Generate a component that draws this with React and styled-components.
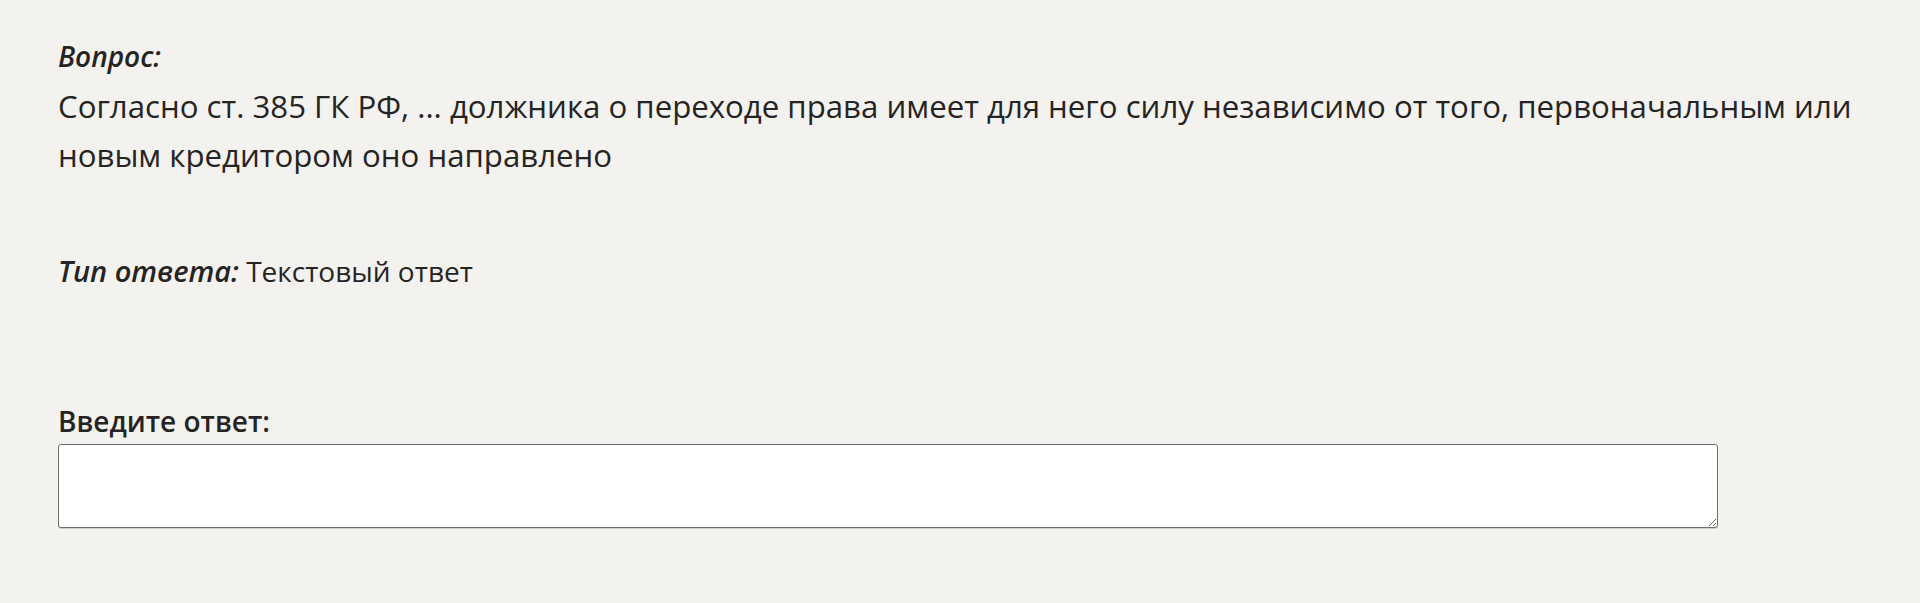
import React from 'react';
import styled, { createGlobalStyle } from 'styled-components';

const GlobalStyle = createGlobalStyle`
  html, body {
    margin: 0;
    padding: 0;
    background: #f3f2ef;
  }
  body {
    font-family: "Open Sans", "Noto Sans", sans-serif;
    color: #252423;
  }
`;

const Page = styled.main`
  padding: 32px 58px 40px;
  font-size: 31.2px;
  line-height: 49.5px;
`;

const Block = styled.section`
  margin-top: ${props => props.gap || 0}px;
  font-size: ${props => props.size || 31.2}px;
`;

const Caption = styled.span`
  display: ${props => props.block ? 'block' : 'inline'};
  font-size: ${props => props.size || 28}px;
  font-style: italic;
  font-weight: 600;
`;

const QuestionText = styled.p`
  margin: 0;
`;

const FieldLabel = styled.label`
  display: block;
  font-size: 28px;
  font-weight: 600;
  line-height: 37px;
  margin-bottom: 4px;
`;

const AnswerInput = styled.textarea`
  display: block;
  box-sizing: border-box;
  width: 92%;
  height: 84px;
  margin: 0;
  padding: 8px 12px;
  background: #ffffff;
  border: 1px solid #6e6e6e;
  border-radius: 3px;
  box-shadow: 0 1px 0 rgba(0, 0, 0, 0.15);
  font-family: inherit;
  font-size: 24px;
  color: inherit;
  resize: vertical;
`;

export default function App() {
  return (
    <>
      <GlobalStyle />
      <Page>
        <Block>
          <Caption block>Вопрос:</Caption>
          <QuestionText>
            Согласно ст. 385 ГК РФ, ... должника о переходе права имеет для него силу независимо от того, первоначальным или новым кредитором оно направлено
          </QuestionText>
        </Block>

        <Block gap={65} size={28}>
          <Caption size={29}>Тип ответа:</Caption> Текстовый ответ
        </Block>

        <Block gap={107}>
          <FieldLabel htmlFor="answer">Введите ответ:</FieldLabel>
          <AnswerInput id="answer" />
        </Block>
      </Page>
    </>
  );
}
